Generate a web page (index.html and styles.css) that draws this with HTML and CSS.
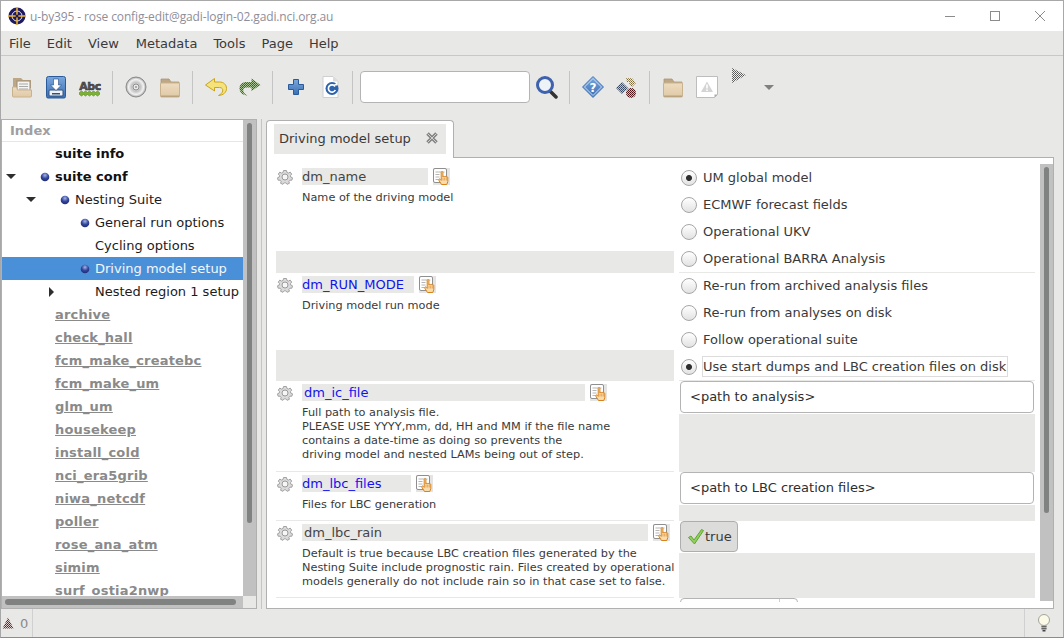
FILE: index.html
```html
<!DOCTYPE html>
<html>
  <head>
    <title>rose config-edit</title>
    <link rel="stylesheet" href="styles.css">
  </head>
  <body>

    <!-- shared icons -->
    <svg class="defs" width="0" height="0">
      <defs>
        <pattern id="dith-green" width="2" height="2" patternUnits="userSpaceOnUse">
          <rect width="2" height="2" fill="#a9c494"/><rect width="1" height="1" fill="#2f5f25"/><rect x="1" y="1" width="1" height="1" fill="#3f7030"/>
        </pattern>
        <pattern id="dith-gray" width="2" height="2" patternUnits="userSpaceOnUse">
          <rect width="2" height="2" fill="#f0f0f0"/><rect width="1" height="1" fill="#555"/><rect x="1" y="1" width="1" height="1" fill="#666"/>
        </pattern>
        <pattern id="dith-red" width="2" height="2" patternUnits="userSpaceOnUse">
          <rect width="2" height="2" fill="#d8b8b8"/><rect width="1" height="1" fill="#7c1c22"/><rect x="1" y="1" width="1" height="1" fill="#4a1014"/>
        </pattern>
        <pattern id="dith-warn" width="2" height="2" patternUnits="userSpaceOnUse">
          <rect width="2" height="2" fill="#e0d0d0"/><rect width="1" height="1" fill="#7c2c30"/><rect x="1" y="1" width="1" height="1" fill="#333"/>
        </pattern>
        <pattern id="dith-blue" width="2" height="2" patternUnits="userSpaceOnUse">
          <rect width="2" height="2" fill="#b8c0cc"/><rect width="1" height="1" fill="#33435f"/><rect x="1" y="1" width="1" height="1" fill="#4c5c76"/>
        </pattern>
        <pattern id="dith-yellow" width="2" height="2" patternUnits="userSpaceOnUse">
          <rect width="2" height="2" fill="#ecead8"/><rect width="1" height="1" fill="#7a6c30"/><rect x="1" y="1" width="1" height="1" fill="#98885a"/>
        </pattern>
        <radialGradient id="ball" cx="0.5" cy="0.3" r="0.75">
          <stop offset="0" stop-color="#a8b4e4"/><stop offset="0.5" stop-color="#34479e"/><stop offset="1" stop-color="#1b2768"/>
        </radialGradient>
        <radialGradient id="cd" cx="0.5" cy="0.5" r="0.5">
          <stop offset="0" stop-color="#f6f6f6"/><stop offset="0.45" stop-color="#c4c4c4"/><stop offset="0.75" stop-color="#f2f2f2"/><stop offset="1" stop-color="#a4a4a4"/>
        </radialGradient>
        <linearGradient id="folder" x1="0" y1="0" x2="0" y2="1">
          <stop offset="0" stop-color="#eedcc0"/><stop offset="1" stop-color="#dfc9a6"/>
        </linearGradient>
        <linearGradient id="blue" x1="0" y1="0" x2="0" y2="1">
          <stop offset="0" stop-color="#7ba7dc"/><stop offset="1" stop-color="#3a6fb5"/>
        </linearGradient>
        <symbol id="i-ball" viewBox="0 0 10 10">
          <circle cx="5" cy="5" r="4.300" fill="url(#ball)"/>
        </symbol>
        <symbol id="i-gear" viewBox="0 0 16 16">
          <path d="M6.500 1.500h3l.4 1.900 1.600.7 1.700-1 1.500 2-1.200 1.500.2 1.400 1.800.8-.6 2.400-2 0-1 1.200.5 1.900-2.400 1-1.200-1.500h-1.600l-1.200 1.500-2.400-1 .5-1.900-1-1.200-2 0-.6-2.400 1.800-.8.2-1.400-1.200-1.500 1.500-2 1.700 1 1.600-.7z" fill="#dadada" stroke="#a2a2a2"/>
          <circle cx="8" cy="8" r="3" fill="#f6f6f6" stroke="#9a9a9a"/>
        </symbol>
        <symbol id="i-hand" viewBox="0 0 17 17">
          <rect width="17" height="17" fill="#e4e4e3"/>
          <rect x=".5" y=".5" width="13" height="14" rx="1.500" fill="#fff" stroke="#8f8f8f"/>
          <path d="M2.500 4h9M2.500 6.500h4M2.500 9h4M2.500 11.500h3" stroke="#b5b5b5"/>
          <path d="M8.500 16.500 5.800 12.200c-.6-1 .7-1.700 1.400-.9l1 1.100V4.500c0-1.300 1.700-1.300 1.700 0V9c.2-1 1.700-1 1.700 0 .2-.8 1.600-.8 1.600.1.300-.6 1.600-.5 1.600.5v4l-1 2.900z" fill="#f9dcae" stroke="#d9821a"/>
          <path d="M10 9.500v3M11.700 9.500v3M13.300 9.500v3" stroke="#d9821a" stroke-width=".6"/>
        </symbol>
        <symbol id="i-folder" viewBox="0 0 24 24">
          <path d="M3 4h8l2 3h8v5H3z" fill="#bda785" stroke="#ad9773" stroke-width=".8"/>
          <rect x="2.500" y="8" width="19" height="14" rx="1" fill="url(#folder)" stroke="#c9b28e"/>
          <rect x="3" y="20.500" width="18" height="1.500" fill="#b9a37f"/>
        </symbol>
      </defs>
    </svg>

    <div class="window">

      <div class="titlebar">
        <svg class="logo" width="20" height="20" viewBox="0 0 20 20">
          <circle cx="10" cy="10" r="8.500" fill="#1f1a5e"/>
          <circle cx="10" cy="10" r="5" fill="none" stroke="#e8e4f0" stroke-width="1"/>
          <path d="M10 1v18M1 10h18" stroke="#f0b52c" stroke-width="1.500"/>
          <circle cx="10" cy="10" r="1.500" fill="#1f1a5e"/>
        </svg>
        <span class="title">u-by395 - rose config-edit@gadi-login-02.gadi.nci.org.au</span>
        <div class="winctl">
          <svg width="10" height="10" viewBox="0 0 10 10"><path d="M0 5.500h10" stroke="#8c8c8c"/></svg>
          <svg width="10" height="10" viewBox="0 0 10 10"><rect x=".5" y=".5" width="9" height="9" fill="none" stroke="#8c8c8c"/></svg>
          <svg width="10" height="10" viewBox="0 0 10 10"><path d="M0 0l10 10M10 0 0 10" stroke="#8c8c8c"/></svg>
        </div>
      </div>

      <div class="menubar">
        <span>File</span><span>Edit</span><span>View</span><span class="meta">Metadata</span><span>Tools</span><span>Page</span><span>Help</span>
      </div>

      <div class="toolbar">
        <span class="tool">
          <svg width="24" height="24" viewBox="0 0 24 24">
            <path d="M3 3h8l2 2h8v8H3z" fill="#bda785"/>
            <rect x="7" y="6" width="13" height="11" fill="#f4f4f2" stroke="#9a8d78"/>
            <path d="M9 9h9M9 11.500h9M9 14h9" stroke="#a8a8a8"/>
            <path d="M2.500 12h4l1 3h14v6a1 1 0 0 1-1 1h-17a1 1 0 0 1-1-1z" fill="url(#folder)" stroke="#c9b28e"/>
          </svg>
        </span>
        <span class="tool">
          <svg width="24" height="24" viewBox="0 0 24 24">
            <path d="M4.500 1.500h15a2 2 0 0 1 2 2v18a1.500 1.500 0 0 1-1.500 1.500H4a1.500 1.500 0 0 1-1.500-1.500V3.500a2 2 0 0 1 2-2z" fill="url(#blue)" stroke="#2b5a9a"/>
            <rect x="5" y="15" width="14" height="6" rx="1" fill="#eef2f7" stroke="#33507a"/>
            <rect x="8" y="18" width="8" height="1.500" fill="#33507a"/>
            <path d="M9.500 4h5v6h3L12 15.500 6.500 10h3z" fill="#fff" stroke="#2a4a78" stroke-width=".6"/>
          </svg>
        </span>
        <span class="tool">
          <svg width="24" height="24" viewBox="0 0 24 24">
            <text x="12" y="14.500" class="abc">Abc</text>
            <path d="M1.500 17.500l2-1.500 2 1.500 2-1.500 2 1.500 2-1.500 2 1.500 2-1.500 2 1.500 2-1.500 2 1.500v2l-2 1.500-2-1.500-2 1.500-2-1.500-2 1.500-2-1.500-2 1.500-2-1.500-2 1.500-2-1.500z" fill="#7fb13a" stroke="#4f8122" stroke-width=".6"/>
          </svg>
        </span>
        <span class="sep"></span>
        <span class="tool">
          <svg width="24" height="24" viewBox="0 0 24 24">
            <circle cx="12" cy="12" r="10" fill="url(#cd)" stroke="#8c8c8c"/>
            <circle cx="12" cy="12" r="3" fill="#e8e8e7" stroke="#8f8f8f"/>
            <circle cx="12" cy="12" r="1" fill="#9a9a9a"/>
          </svg>
        </span>
        <span class="tool"><svg width="24" height="24"><use href="#i-folder"/></svg></span>
        <span class="sep"></span>
        <span class="tool">
          <svg width="24" height="24" viewBox="0 0 24 24">
            <path d="M10.500 3.500 1.500 10l9 6v-3.500h5c2.800 0 3.500 1.800 3.200 3.500-.3 1.800-1.700 3.200-4.200 4.500 5-.3 8-3.300 8-7 0-4-3-6.500-7-6.500h-5z" fill="#f6e27a" stroke="#c9a51e" stroke-linejoin="round"/>
          </svg>
        </span>
        <span class="tool">
          <svg width="24" height="24" viewBox="0 0 24 24">
            <path d="M13.500 3.500 22.500 10l-9 6v-3.500h-5c-2.800 0-3.500 1.800-3.200 3.500.3 1.800 1.700 3.200 4.200 4.500-5-.3-8-3.300-8-7 0-4 3-6.500 7-6.500h5z" fill="url(#dith-green)"/>
          </svg>
        </span>
        <span class="sep"></span>
        <span class="tool">
          <svg width="24" height="24" viewBox="0 0 24 24">
            <path d="M9.500 4.500h5v5h5v5h-5v5h-5v-5h-5v-5h5z" fill="url(#blue)" stroke="#2b5a9a" stroke-linejoin="round"/>
          </svg>
        </span>
        <span class="tool">
          <svg width="24" height="24" viewBox="0 0 24 24">
            <path d="M5 1.500h10l5 5v16H5z" fill="#fff" stroke="#cfcfcf"/>
            <path d="M15 1.500v5h5z" fill="#dcdcdc"/>
            <circle cx="14" cy="13.500" r="6.500" fill="#2d62ad"/>
            <path d="M17 11.500a3.600 3.600 0 1 0 .3 3.500" fill="none" stroke="#fff" stroke-width="1.700"/>
            <path d="M14.500 10.500h4.500v-2.500z" fill="#fff"/>
          </svg>
        </span>
        <span class="sep"></span>
        <input class="search" type="text">
        <span class="tool">
          <svg width="24" height="24" viewBox="0 0 24 24">
            <path d="M15.500 16.500 21 22" stroke="#333" stroke-width="3.500" stroke-linecap="round"/>
            <circle cx="10" cy="10" r="7.500" fill="#eef3f8" stroke="#3e62ad" stroke-width="3"/>
          </svg>
        </span>
        <span class="sep"></span>
        <span class="tool">
          <svg width="24" height="24" viewBox="0 0 24 24">
            <path d="M12 1.500 22.500 12 12 22.500 1.500 12z" fill="url(#blue)" stroke="#4f7fbf" stroke-linejoin="round"/>
            <path d="M12 3.500 20.500 12 12 20.500 3.500 12z" fill="none" stroke="#cfe0f4"/>
            <text x="12" y="16.500" class="qmark">?</text>
          </svg>
        </span>
        <span class="tool">
          <svg width="24" height="24" viewBox="0 0 24 24">
            <path d="M11 3h6l4 5-4 4-3-3 1-2h-3z" fill="url(#dith-yellow)"/>
            <path d="M7 7l6 6-6 6-6-6z" fill="url(#dith-blue)"/>
            <circle cx="16" cy="18" r="5" fill="url(#dith-red)"/>
          </svg>
        </span>
        <span class="sep"></span>
        <span class="tool"><svg width="24" height="24"><use href="#i-folder"/></svg></span>
        <span class="tool">
          <svg width="24" height="24" viewBox="0 0 24 24">
            <path d="M1.500 1.500h21v18l-3 3h-18z" fill="#fff" stroke="#bdbdbd"/>
            <path d="M22.500 19.500h-3v3z" fill="#aaa"/>
            <path d="M12 6.500 18 17H6z" fill="#d4d4d4"/>
            <path d="M11.200 9.500h1.600v4h-1.600zM11.200 14.500h1.600V16h-1.600z" fill="#fff"/>
          </svg>
        </span>
        <span class="tool tool-play">
          <svg width="16" height="18" viewBox="0 0 16 18">
            <path d="M1 1 15 8 1 16z" fill="url(#dith-gray)"/>
          </svg>
        </span>
        <span class="drop"></span>
      </div>

      <div class="main">

        <div class="left">
          <div class="left-body">
            <div class="left-inner">
              <div class="index-head">Index</div>
              <div class="tree">
                <div class="node top"><span class="arrow"></span><span class="dot"></span><span class="lab">suite info</span></div>
                <div class="node top"><span class="arrow open"></span><span class="dot"><svg width="10" height="10"><use href="#i-ball"/></svg></span><span class="lab">suite conf</span></div>
                <div class="node lvl1"><span class="arrow open"></span><span class="dot"><svg width="10" height="10"><use href="#i-ball"/></svg></span><span class="lab">Nesting Suite</span></div>
                <div class="node lvl2"><span class="arrow"></span><span class="dot"><svg width="10" height="10"><use href="#i-ball"/></svg></span><span class="lab">General run options</span></div>
                <div class="node lvl2"><span class="arrow"></span><span class="dot"></span><span class="lab">Cycling options</span></div>
                <div class="node lvl2 selected"><span class="arrow"></span><span class="dot"><svg width="10" height="10"><use href="#i-ball"/></svg></span><span class="lab">Driving model setup</span></div>
                <div class="node lvl2"><span class="arrow closed"></span><span class="dot"></span><span class="lab">Nested region 1 setup</span></div>
                <div class="node off"><span class="arrow"></span><span class="dot"></span><span class="lab">archive</span></div>
                <div class="node off"><span class="arrow"></span><span class="dot"></span><span class="lab">check_hall</span></div>
                <div class="node off"><span class="arrow"></span><span class="dot"></span><span class="lab">fcm_make_createbc</span></div>
                <div class="node off"><span class="arrow"></span><span class="dot"></span><span class="lab">fcm_make_um</span></div>
                <div class="node off"><span class="arrow"></span><span class="dot"></span><span class="lab">glm_um</span></div>
                <div class="node off"><span class="arrow"></span><span class="dot"></span><span class="lab">housekeep</span></div>
                <div class="node off"><span class="arrow"></span><span class="dot"></span><span class="lab">install_cold</span></div>
                <div class="node off"><span class="arrow"></span><span class="dot"></span><span class="lab">nci_era5grib</span></div>
                <div class="node off"><span class="arrow"></span><span class="dot"></span><span class="lab">niwa_netcdf</span></div>
                <div class="node off"><span class="arrow"></span><span class="dot"></span><span class="lab">poller</span></div>
                <div class="node off"><span class="arrow"></span><span class="dot"></span><span class="lab">rose_ana_atm</span></div>
                <div class="node off"><span class="arrow"></span><span class="dot"></span><span class="lab">simim</span></div>
                <div class="node off"><span class="arrow"></span><span class="dot"></span><span class="lab">surf_ostia2nwp</span></div>
              </div>
            </div>
            <div class="vtrough tree-v"><div class="vthumb"></div></div>
          </div>
          <div class="hbar">
            <div class="htrough"><div class="hthumb"></div></div>
            <div class="corner"></div>
          </div>
        </div>

        <div class="gutter"></div>

        <div class="right">
          <div class="tabstrip">
            <div class="tab">
              <div class="tab-inner">
                <span>Driving model setup</span>
                <svg width="14" height="14" viewBox="0 0 14 14"><path d="M2.500 2.500l9 9M11.500 2.500l-9 9" stroke="#858585" stroke-width="3.500"/><path d="M2.500 2.500l9 9M11.500 2.500l-9 9" stroke="#cfcfcf"/></svg>
              </div>
            </div>
          </div>
          <div class="page">
            <div class="scroller">

              <div class="row r-name">
                <div class="cell">
                  <div class="var">
                    <svg class="gear" width="16" height="16"><use href="#i-gear"/></svg>
                    <span class="name w-name">dm_name</span>
                    <svg width="17" height="17"><use href="#i-hand"/></svg>
                  </div>
                  <div class="desc">Name of the driving model</div>
                  <div class="filler f-small"></div>
                </div>
                <div class="cell vals">
                  <label class="opt"><span class="radio on"></span><span>UM global model</span></label>
                  <label class="opt"><span class="radio"></span><span>ECMWF forecast fields</span></label>
                  <label class="opt"><span class="radio"></span><span>Operational UKV</span></label>
                  <label class="opt"><span class="radio"></span><span>Operational BARRA Analysis</span></label>
                </div>
              </div>

              <div class="row r-mode">
                <div class="cell">
                  <div class="var">
                    <svg class="gear" width="16" height="16"><use href="#i-gear"/></svg>
                    <span class="name changed w-mode">dm_RUN_MODE</span>
                    <svg width="17" height="17"><use href="#i-hand"/></svg>
                  </div>
                  <div class="desc">Driving model run mode</div>
                  <div class="filler f-big"></div>
                </div>
                <div class="cell vals">
                  <label class="opt"><span class="radio"></span><span>Re-run from archived analysis files</span></label>
                  <label class="opt"><span class="radio"></span><span>Re-run from analyses on disk</span></label>
                  <label class="opt"><span class="radio"></span><span>Follow operational suite</span></label>
                  <label class="opt"><span class="radio on"></span><span class="focus">Use start dumps and LBC creation files on disk</span></label>
                </div>
              </div>

              <div class="row r-ic">
                <div class="cell">
                  <div class="var">
                    <svg class="gear" width="16" height="16"><use href="#i-gear"/></svg>
                    <span class="name changed pad w-ic">dm_ic_file</span>
                    <svg width="17" height="17"><use href="#i-hand"/></svg>
                  </div>
                  <div class="desc">Full path to analysis file.<br>PLEASE USE YYYY,mm, dd, HH and MM if the file name<br>contains a date-time as doing so prevents the<br>driving model and nested LAMs being out of step.</div>
                </div>
                <div class="cell vals">
                  <div class="entry">&lt;path to analysis&gt;</div>
                  <div class="filler grow"></div>
                </div>
              </div>

              <div class="row r-lbc">
                <div class="cell">
                  <div class="var">
                    <svg class="gear" width="16" height="16"><use href="#i-gear"/></svg>
                    <span class="name changed w-lbc">dm_lbc_files</span>
                    <svg width="17" height="17"><use href="#i-hand"/></svg>
                  </div>
                  <div class="desc">Files for LBC generation</div>
                </div>
                <div class="cell vals">
                  <div class="entry">&lt;path to LBC creation files&gt;</div>
                  <div class="filler grow"></div>
                </div>
              </div>

              <div class="row r-rain">
                <div class="cell">
                  <div class="var">
                    <svg class="gear" width="16" height="16"><use href="#i-gear"/></svg>
                    <span class="name pad w-rain">dm_lbc_rain</span>
                    <svg width="17" height="17"><use href="#i-hand"/></svg>
                  </div>
                  <div class="desc">Default is true because LBC creation files generated by the<br>Nesting Suite include prognostic rain. Files created by operational<br>models generally do not include rain so in that case set to false.</div>
                </div>
                <div class="cell vals">
                  <div class="toggle">
                    <svg width="18" height="18" viewBox="0 0 18 18"><path d="M1.500 9.500 4 8l3 4L14.500 1.500l2 1L7.500 16z" fill="#8fd05a" stroke="#62a534" stroke-linejoin="round"/></svg>
                    <span>true</span>
                  </div>
                  <div class="filler grow"></div>
                </div>
              </div>

              <div class="row r-last">
                <div class="cell"><div class="var"><span class="stub"></span></div></div>
                <div class="cell vals"><div class="spin"><span></span></div></div>
              </div>

            </div>
            <div class="vtrough page-v"><div class="vthumb"></div></div>
          </div>
        </div>

      </div>

      <div class="statusbar">
        <div class="st-left">
          <svg width="12" height="12" viewBox="0 0 12 12"><path d="M6 .5 11.500 11.500H.5z" fill="url(#dith-warn)"/></svg>
          <span>0</span>
        </div>
        <div class="st-right">
          <svg width="14" height="18" viewBox="0 0 14 18">
            <circle cx="7" cy="6" r="5.500" fill="#fbfae6" stroke="#a4a49a"/>
            <rect x="4.500" y="11" width="5" height="5" fill="#a8a8a8"/>
            <path d="M4.500 12.500h5M4.500 14.500h5" stroke="#666"/>
            <rect x="5.500" y="16" width="3" height="1.500" fill="#444"/>
          </svg>
        </div>
      </div>

    </div>
  </body>
</html>
```

FILE: styles.css
```css
html, body {
    padding: 0;
    margin: 0;
}

body {
    width: 1064px;
    height: 638px;
    overflow: hidden;
    font-family: "DejaVu Sans", sans-serif;
    font-size: 13px;
    color: #3a3a3a;
    background: #e8e8e7;
}

.defs {
    display: block;
    height: 0;
}

.window {
    width: 1064px;
    height: 638px;
    box-sizing: border-box;
    border: 1px solid #a8a8a8;
    border-bottom-color: #8c8c8c;
    display: flex;
    flex-direction: column;
}

/* title bar */
.titlebar {
    height: 30px;
    flex: none;
    background: #fff;
    display: flex;
    align-items: center;
    padding-left: 6px;
}

.logo {
    margin-right: 3px;
}

.title {
    font-family: "Open Sans", sans-serif;
    font-size: 12px;
    letter-spacing: -0.12px;
    color: #8e8e9a;
}

.winctl {
    margin-left: auto;
    display: flex;
    gap: 35px;
    padding-right: 18px;
}

/* menu */
.menubar {
    height: 25px;
    flex: none;
    box-sizing: border-box;
    display: flex;
    align-items: center;
    border-bottom: 1px solid #c8c8c8;
}

.menubar span {
    padding: 0 8px;
}

.menubar .meta {
    margin-left: 1px;
}

/* toolbar */
.toolbar {
    height: 62px;
    flex: none;
    box-sizing: border-box;
    display: flex;
    align-items: center;
    padding-left: 4px;
}

.tool {
    width: 34px;
    height: 34px;
    display: flex;
    align-items: center;
    justify-content: center;
    flex: none;
}

.tool-play {
    width: 30px;
    margin-top: -22px;
}

.sep {
    width: 1px;
    height: 33px;
    background: #c4c4c4;
    margin-left: 5px;
    margin-right: 6px;
    flex: none;
}

.search {
    width: 170px;
    height: 32px;
    box-sizing: border-box;
    margin: 0 0 0 1px;
    border: 1px solid #b4b4b4;
    border-radius: 4px;
    background: #fff;
    flex: none;
}

.drop {
    width: 0;
    height: 0;
    margin-left: 10px;
    border-left: 5px solid transparent;
    border-right: 5px solid transparent;
    border-top: 5px solid #808080;
}

.abc {
    font-family: "DejaVu Sans", sans-serif;
    font-weight: bold;
    font-size: 11px;
    letter-spacing: -0.4px;
    text-anchor: middle;
    fill: #555;
    stroke: #2c2c2c;
    stroke-width: 0.5px;
}

.qmark {
    font-family: "DejaVu Sans", sans-serif;
    font-weight: bold;
    font-size: 12px;
    text-anchor: middle;
    fill: #fff;
}

/* main panes */
.main {
    height: 491px;
    flex: none;
    display: flex;
    box-sizing: border-box;
    padding-top: 1px;
}

.left {
    width: 256px;
    flex: none;
    box-sizing: border-box;
    border: 1px solid #b0b0b0;
    display: flex;
    flex-direction: column;
    background: #fff;
}

.left-body {
    flex: 1;
    min-height: 0;
    display: flex;
}

.left-inner {
    width: 241px;
    flex: none;
    display: flex;
    flex-direction: column;
}

.index-head {
    height: 21px;
    line-height: 21px;
    flex: none;
    padding-left: 8px;
    font-weight: bold;
    color: #a0a0a0;
    border-bottom: 1px solid #e6e6e6;
}

.tree {
    flex: 1;
    min-height: 0;
    overflow: hidden;
}

.node {
    height: 23px;
    display: flex;
    align-items: center;
    color: #1c1c1c;
    white-space: nowrap;
}

.lvl1 {
    padding-left: 20px;
}

.lvl2 {
    padding-left: 40px;
}

.top .lab {
    font-weight: bold;
    color: #111;
}

.off .lab {
    font-weight: bold;
    letter-spacing: 0.2px;
    color: #8a8a8a;
    text-decoration: underline;
}

.selected {
    background: #4a90d9;
}

.selected .lab {
    color: #f4f7fb;
}

.arrow {
    width: 18px;
    height: 23px;
    flex: none;
    display: flex;
    align-items: center;
    justify-content: center;
}

.arrow.open::before {
    content: "";
    border-left: 5px solid transparent;
    border-right: 5px solid transparent;
    border-top: 5px solid #2e2e2e;
}

.arrow.closed::before {
    content: "";
    border-top: 5px solid transparent;
    border-bottom: 5px solid transparent;
    border-left: 5px solid #2e2e2e;
}

.dot {
    width: 14px;
    height: 14px;
    margin-left: 18px;
    flex: none;
    display: flex;
    align-items: center;
    justify-content: center;
}

.lab {
    margin-left: 3px;
}

/* scrollbars */
.vtrough {
    flex: none;
    width: 13px;
    background: #c1c1c1;
    box-sizing: border-box;
    padding: 0 4px;
}

.vthumb {
    background: #7f8281;
    border-radius: 3px;
}

.tree-v {
    padding-top: 3px;
}

.tree-v .vthumb {
    height: 400px;
}

.hbar {
    height: 12px;
    flex: none;
    display: flex;
}

.htrough {
    width: 241px;
    flex: none;
    background: #c1c1c1;
    box-sizing: border-box;
    padding: 3px 7px 3px 3px;
}

.hthumb {
    height: 6px;
    background: #7f8281;
    border-radius: 3px;
}

.corner {
    flex: 1;
    background: #e8e8e7;
}

.gutter {
    width: 9px;
    flex: none;
    position: relative;
}

.gutter::after {
    content: "";
    position: absolute;
    left: 4px;
    top: 0;
    bottom: 0;
    width: 1px;
    background: #c4c4c4;
}

/* notebook */
.right {
    width: 788px;
    flex: none;
    display: flex;
    flex-direction: column;
}

.tabstrip {
    height: 39px;
    flex: none;
    box-sizing: border-box;
    border-bottom: 1px solid #b0b0b0;
    display: flex;
    align-items: flex-end;
}

.tab {
    width: 188px;
    height: 38px;
    box-sizing: border-box;
    margin-bottom: -1px;
    border: 1px solid #b0b0b0;
    border-bottom: none;
    border-radius: 4px 4px 0 0;
    background: #fff;
    padding: 3px 7px 4px 7px;
}

.tab-inner {
    height: 30px;
    box-sizing: border-box;
    background: #e8e8e7;
    display: flex;
    align-items: center;
    padding-left: 5px;
    padding-bottom: 2px;
    gap: 14px;
}

.page {
    flex: 1;
    min-height: 0;
    display: flex;
    background: #fff;
    box-sizing: border-box;
    border: 1px solid #b0b0b0;
    border-top: none;
    padding: 7px 0 6px 9px;
}

.scroller {
    width: 759px;
    flex: none;
    overflow: hidden;
}

.page-v {
    margin-left: 5px;
    margin-top: -1px;
    height: 437px;
    padding-top: 3px;
}

.page-v .vthumb {
    height: 346px;
}

.row {
    display: grid;
    grid-template-columns: 398px 356px;
    column-gap: 5px;
}

.r-name { height: 108px; }
.r-mode { height: 108px; }
.r-ic { height: 91px; }
.r-lbc { height: 49px; }
.r-rain { height: 77px; }
.r-last { height: 30px; }

.cell {
    display: flex;
    flex-direction: column;
    box-sizing: border-box;
    border-bottom: 1px solid #e8e8e7;
    min-height: 0;
}

.r-last .cell {
    border-bottom: none;
}

.var {
    display: flex;
    align-items: center;
    height: 17px;
    margin-top: 3px;
    flex: none;
}

.gear {
    margin-left: 1px;
    margin-right: 9px;
    flex: none;
}

.name {
    height: 17px;
    line-height: 17px;
    background: #e8e8e7;
    margin-right: 5px;
    box-sizing: border-box;
    color: #444;
    flex: none;
}

.name.changed {
    color: #1212f0;
}

.name.pad {
    padding-left: 2px;
}

.w-name { width: 126px; }
.w-mode { width: 112px; }
.w-ic { width: 283px; }
.w-lbc { width: 109px; }
.w-rain { width: 346px; }

.stub {
    display: block;
    width: 142px;
    height: 1px;
    margin-left: 26px;
    background: #e8e8e7;
}

.desc {
    margin-top: 6px;
    padding-left: 26px;
    font-size: 11.3px;
    line-height: 14px;
    color: #3a3a3a;
    white-space: nowrap;
}

.r-ic .desc {
    margin-top: 5px;
}

.filler {
    background: #e8e8e7;
    flex: none;
}

.filler.f-small {
    height: 21px;
    margin-top: auto;
}

.filler.f-big {
    height: 30px;
    margin-top: auto;
}

.filler.grow {
    flex: 1;
    margin-top: 1px;
}

/* values */
.opt {
    height: 27px;
    flex: none;
    display: flex;
    align-items: center;
    padding-left: 2px;
}

.opt:first-child {
    margin-top: -1px;
}

.radio {
    width: 16px;
    height: 16px;
    box-sizing: border-box;
    border: 1px solid #a6a6a6;
    border-radius: 50%;
    background: linear-gradient(#ffffff, #e2e2e2);
    margin-right: 6px;
    flex: none;
}

.radio.on {
    background: radial-gradient(circle, #2e2e2e 0, #2e2e2e 2.5px, transparent 3.5px), linear-gradient(#ffffff, #e2e2e2);
}

.focus {
    outline: 1px solid #dcdcdc;
    padding: 2px 0 2px 0;
    width: 304px;
    white-space: nowrap;
}

.entry {
    height: 32px;
    line-height: 30px;
    box-sizing: border-box;
    margin: 0 1px;
    padding-left: 9px;
    background: #fff;
    border: 1px solid #b4b4b4;
    border-radius: 4px;
    color: #2e2e2e;
    flex: none;
}

.toggle {
    width: 58px;
    height: 31px;
    box-sizing: border-box;
    margin-left: 1px;
    background: #dcdcdb;
    border: 1px solid #aeaeae;
    border-radius: 4px;
    display: flex;
    align-items: center;
    padding-left: 6px;
    flex: none;
}

.spin {
    width: 118px;
    height: 32px;
    box-sizing: border-box;
    margin-left: 1px;
    border: 1px solid #b4b4b4;
    border-radius: 4px;
    display: flex;
    justify-content: flex-end;
}

.spin span {
    width: 17px;
    border-left: 1px solid #d0d0d0;
}

/* status bar */
.statusbar {
    flex: 1;
    display: flex;
    justify-content: space-between;
    min-height: 0;
}

.st-left {
    width: 32px;
    box-sizing: border-box;
    border-right: 1px solid #d0d0d0;
    display: flex;
    align-items: center;
    padding-left: 1px;
    gap: 6px;
    color: #8a8a8a;
}

.st-right {
    width: 39px;
    box-sizing: border-box;
    border-left: 1px solid #d0d0d0;
    display: flex;
    align-items: center;
    justify-content: center;
}
```
